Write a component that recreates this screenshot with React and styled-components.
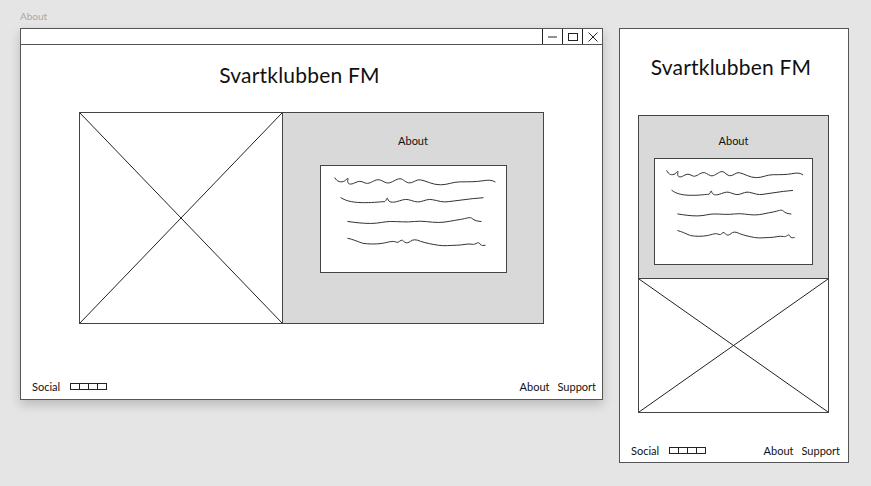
import React from 'react';
import styled, { createGlobalStyle } from 'styled-components';

const GlobalStyle = createGlobalStyle`
  html, body {
    margin: 0;
    padding: 0;
    background: #e5e5e5;
    font-family: "Lato", "Noto Sans", sans-serif;
    color: #1a1a1a;
  }
`

const Page = styled.div`
  width: 871px;
  height: 486px;
  box-sizing: border-box;
  padding: 10px 0 0 20px;
  overflow: hidden;
`

const PageLabel = styled.div`
  font-size: 10px;
  line-height: 12px;
  height: 18px;
  color: #a8a8a8;
`

const Screens = styled.div`
  display: flex;
  align-items: flex-start;
  gap: 16px;
`

const Window = styled.div`
  width: ${p => p.$w}px;
  height: ${p => p.$h}px;
  box-sizing: border-box;
  background: #fff;
  border: 1px solid #555;
  display: flex;
  flex-direction: column;
  box-shadow: ${p => p.$shadow ? '0 5px 10px rgba(0,0,0,0.18)' : 'none'};
`

const TitleBar = styled.div`
  height: 15px;
  flex-shrink: 0;
  border-bottom: 1px solid #555;
  display: flex;
  justify-content: flex-end;
`

const WinButton = styled.div`
  width: 19px;
  height: 15px;
  border-left: 1px solid #222;
  display: flex;
  align-items: center;
  justify-content: center;
  svg { display: block; }
`

const Heading = styled.h1`
  margin: 0;
  font-weight: 400;
  font-size: 21px;
  letter-spacing: 0.2px;
  text-align: center;
  color: #111;
  padding: ${p => p.$top}px ${p => p.$shift}px 0 0;
  height: ${p => p.$h}px;
  line-height: 24px;
  box-sizing: border-box;
  flex-shrink: 0;
`

const DesktopBody = styled.div`
  margin-left: 58px;
  width: 465px;
  height: 212px;
  display: flex;
  border: 1px solid #444;
  box-sizing: border-box;
`

const MobileBody = styled.div`
  margin-left: 18px;
  width: 191px;
  display: flex;
  flex-direction: column;
  border: 1px solid #444;
  box-sizing: border-box;
`

const Placeholder = styled.div`
  width: ${p => p.$w};
  height: ${p => p.$h};
  flex-shrink: 0;
  box-sizing: border-box;
  ${p => p.$sideBorder ? 'border-right: 1px solid #444;' : ''}
  ${p => p.$topBorder ? 'border-top: 1px solid #444;' : ''}
  svg { display: block; width: 100%; height: 100%; }
`

const AboutPanel = styled.div`
  flex: ${p => p.$grow ? '1' : 'none'};
  height: ${p => p.$h};
  background: #d9d9d9;
  display: flex;
  flex-direction: column;
  align-items: center;
  padding-top: ${p => p.$top}px;
  box-sizing: border-box;
`

const PanelTitle = styled.div`
  font-size: 11px;
  line-height: 14px;
  color: #111;
  margin-bottom: ${p => p.$gap}px;
`

const TextCard = styled.div`
  width: ${p => p.$w}px;
  height: ${p => p.$h}px;
  background: #fff;
  border: 1px solid #444;
  box-sizing: border-box;
  svg { display: block; width: 100%; height: 100%; }
`

const Footer = styled.div`
  margin-top: auto;
  display: flex;
  align-items: center;
  justify-content: space-between;
  padding: 0 ${p => p.$pr}px ${p => p.$pb}px ${p => p.$pl}px;
  font-size: 11px;
  color: #111;
`

const Social = styled.div`
  display: flex;
  align-items: center;
  gap: 10px;
`

const IconRow = styled.div`
  display: flex;
  border: 1px solid #222;
  border-right: none;
  height: 7px;
  box-sizing: border-box;
`

const IconCell = styled.span`
  width: 8px;
  border-right: 1px solid #222;
`

const Links = styled.div`
  display: flex;
  gap: 8px;
`

function Cross() {
  return (
    <svg viewBox="0 0 100 100" preserveAspectRatio="none">
      <line x1="0" y1="0" x2="100" y2="100" stroke="#222" strokeWidth="1" vectorEffect="non-scaling-stroke" />
      <line x1="100" y1="0" x2="0" y2="100" stroke="#222" strokeWidth="1" vectorEffect="non-scaling-stroke" />
    </svg>
  )
}

// hand drawn "text" lines inside the about card
function Scribble() {
  const lines = [
    'M14 12 C16 16 20 17 24 15 C26 13 28 11 27 14 C26 19 30 19 34 17 C38 15 40 15 44 17 C48 19 52 15 56 14 C60 13 62 16 66 17 C70 18 74 14 78 13 C82 12 84 16 88 17 C92 18 96 13 100 14 C106 15 112 19 120 19 C128 19 132 16 140 16 C148 16 156 16 162 15 C168 14 172 14 175 16',
    'M20 32 C26 36 34 37 44 37 C54 37 60 36 64 36 C66 35 66 31 67 33 C68 37 72 37 76 36 C80 35 84 33 88 34 C92 35 96 37 100 36 C104 35 108 33 112 34 C118 35 122 37 128 36 C136 35 144 34 152 33 C156 33 160 32 163 32',
    'M27 56 C34 57 42 58 50 58 C58 58 64 56 70 56 C78 56 86 57 94 56 C102 55 110 57 118 57 C126 57 132 55 140 54 C146 53 150 51 152 53 C154 55 158 56 161 56',
    'M27 73 C32 74 36 76 42 78 C48 79 56 79 62 78 C68 77 72 75 76 77 C78 78 80 74 82 75 C84 77 86 79 90 76 C92 74 96 74 100 76 C106 78 112 79 118 80 C124 81 130 80 136 80 C142 80 148 78 152 79 C156 80 158 75 160 79 C162 81 163 80 165 80'
  ]
  return (
    <svg viewBox="0 0 186 107" preserveAspectRatio="none">
      {lines.map((d, i) =>
        <path key={i} d={d} fill="none" stroke="#333" strokeWidth="1" strokeLinecap="round" vectorEffect="non-scaling-stroke" />
      )}
    </svg>
  )
}

function SiteFooter({ pl, pr, pb }) {
  return (
    <Footer $pl={pl} $pr={pr} $pb={pb}>
      <Social>
        <span>Social</span>
        <IconRow>
          {[0, 1, 2, 3].map(i => <IconCell key={i} />)}
        </IconRow>
      </Social>
      <Links>
        <span>About</span>
        <span>Support</span>
      </Links>
    </Footer>
  )
}

function DesktopScreen() {
  return (
    <Window $w={583} $h={372} $shadow>
      <TitleBar>
        <WinButton>
          <svg width="9" height="9" viewBox="0 0 9 9"><line x1="0" y1="5" x2="9" y2="5" stroke="#222" /></svg>
        </WinButton>
        <WinButton>
          <svg width="10" height="8" viewBox="0 0 10 8"><rect x="0.5" y="0.5" width="9" height="7" fill="none" stroke="#222" /></svg>
        </WinButton>
        <WinButton>
          <svg width="10" height="10" viewBox="0 0 10 10">
            <line x1="0.5" y1="0.5" x2="9.5" y2="9.5" stroke="#222" />
            <line x1="9.5" y1="0.5" x2="0.5" y2="9.5" stroke="#222" />
          </svg>
        </WinButton>
      </TitleBar>
      <Heading $top={18} $h={67} $shift={24}>Svartklubben FM</Heading>
      <DesktopBody>
        <Placeholder $w="203px" $h="100%" $sideBorder>
          <Cross />
        </Placeholder>
        <AboutPanel $grow $h="100%" $top={21}>
          <PanelTitle $gap={17}>About</PanelTitle>
          <TextCard $w={187} $h={108}>
            <Scribble />
          </TextCard>
        </AboutPanel>
      </DesktopBody>
      <SiteFooter pl={11} pr={6} pb={6} />
    </Window>
  )
}

function MobileScreen() {
  return (
    <Window $w={230} $h={435}>
      <Heading $top={26} $h={86} $shift={6}>Svartklubben FM</Heading>
      <MobileBody>
        <AboutPanel $h="162px" $top={18}>
          <PanelTitle $gap={10}>About</PanelTitle>
          <TextCard $w={159} $h={107}>
            <Scribble />
          </TextCard>
        </AboutPanel>
        <Placeholder $w="100%" $h="134px" $topBorder>
          <Cross />
        </Placeholder>
      </MobileBody>
      <SiteFooter pl={11} pr={8} pb={5} />
    </Window>
  )
}

export default function App() {
  return (
    <Page>
      <GlobalStyle />
      <PageLabel>About</PageLabel>
      <Screens>
        <DesktopScreen />
        <MobileScreen />
      </Screens>
    </Page>
  )
}
